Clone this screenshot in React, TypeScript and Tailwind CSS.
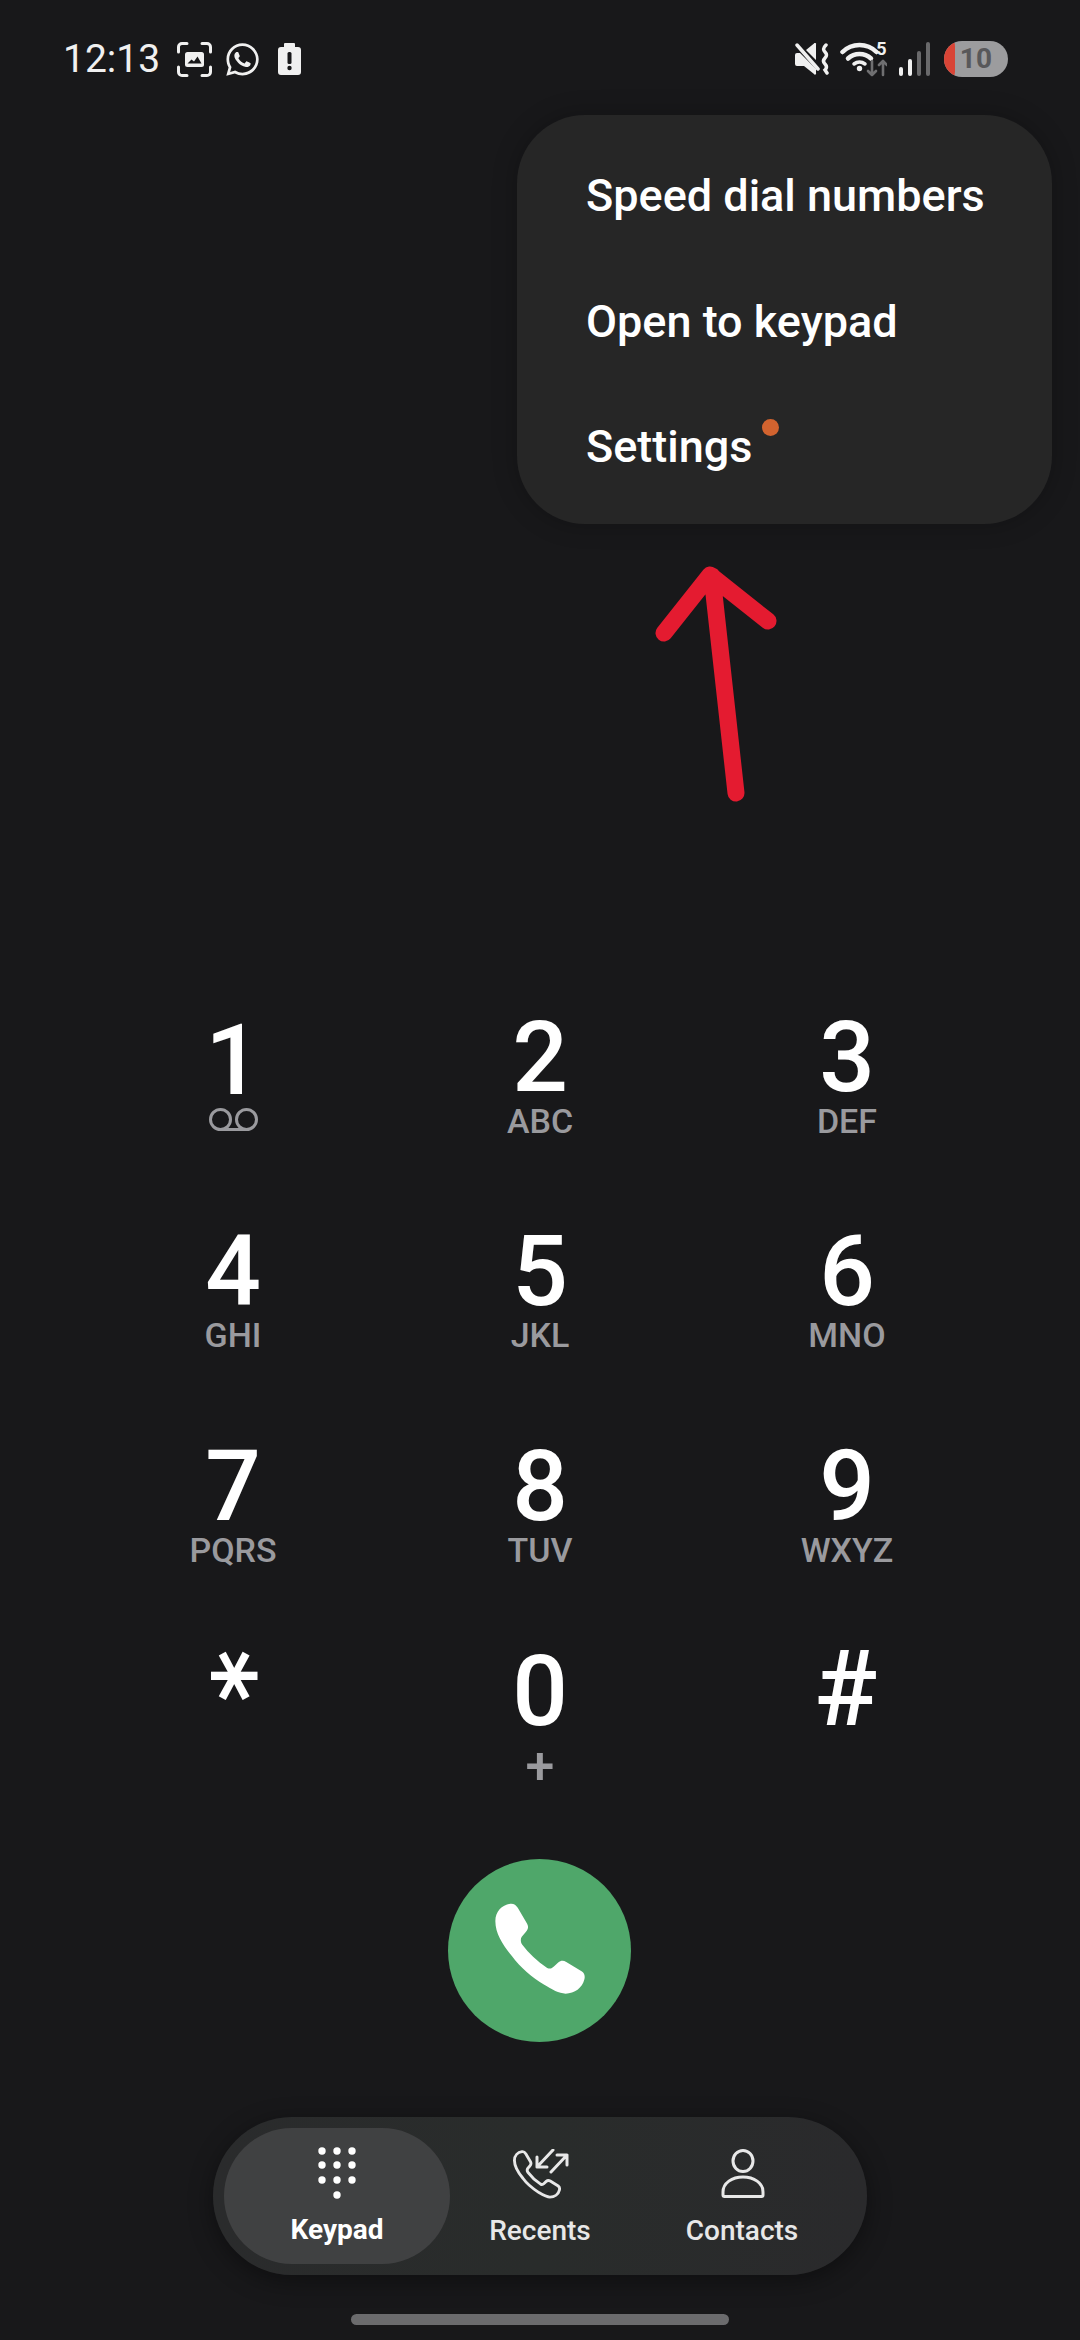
import React from 'react';
import { FaWhatsapp } from 'react-icons/fa';

const PHONE_PATH =
  'M225 245 C225 215 245 197 270 193 C280 192 287 197 292 205 L320 253 C325 262 323 270 316 278 L304 292 C300 298 300 308 305 315 C325 342 350 365 380 385 C388 389 394 387 400 381 L413 369 C420 363 428 362 437 367 L484 396 C491 401 494 410 491 420 C485 445 462 462 435 462 C415 462 395 450 370 435 C335 412 300 385 275 350 C250 320 225 285 225 245 Z';

const keys = [
  { d: '1', sub: 'vm' },
  { d: '2', sub: 'ABC' },
  { d: '3', sub: 'DEF' },
  { d: '4', sub: 'GHI' },
  { d: '5', sub: 'JKL' },
  { d: '6', sub: 'MNO' },
  { d: '7', sub: 'PQRS' },
  { d: '8', sub: 'TUV' },
  { d: '9', sub: 'WXYZ' },
];

const ScreenshotIcon = () => (
  <svg width="35" height="35" viewBox="0 0 35 35" fill="none">
    <path d="M1.5 10V5a3.5 3.5 0 0 1 3.5-3.5h5M25 1.5h5A3.5 3.5 0 0 1 33.5 5v5M33.5 25v5a3.5 3.5 0 0 1-3.5 3.5h-5M10 33.5H5A3.5 3.5 0 0 1 1.5 30v-5" stroke="#f0f0f0" strokeWidth="3" strokeLinecap="round" />
    <rect x="8" y="10" width="19" height="15" rx="2.5" fill="#f0f0f0" />
    <path d="M10.5 21.5l4-4 2.5 2 3.5-5 4 7z" fill="#18181a" />
  </svg>
);

const BatteryAlert = () => (
  <svg width="23" height="32" viewBox="0 0 23 32">
    <path d="M7 0h9a1 1 0 0 1 1 1v3h3a3 3 0 0 1 3 3v22a3 3 0 0 1-3 3H3a3 3 0 0 1-3-3V7a3 3 0 0 1 3-3h3V1a1 1 0 0 1 1-1z" fill="#f0f0f0" />
    <rect x="9.5" y="9" width="4" height="12" rx="1.5" fill="#18181a" />
    <circle cx="11.5" cy="25" r="2.2" fill="#18181a" />
  </svg>
);

const MuteIcon = () => (
  <svg width="35" height="32" viewBox="0 0 35 32" fill="none">
    <path d="M1 12a2 2 0 0 1 2-2h3L22 26v4a1 1 0 0 1-2 1L10 23H3a2 2 0 0 1-2-2z" fill="#f0f0f0" />
    <path d="M12 7l8-6.500a1 1 0 0 1 2 1V17z" fill="#f0f0f0" />
    <path d="M3 2l21 24" stroke="#f0f0f0" strokeWidth="3.500" strokeLinecap="round" />
    <path d="M32 2c-3 3-3 5-1 7s2 4 0 6-2 4 0 6 2 4 0 6l2 3" stroke="#f0f0f0" strokeWidth="3.500" strokeLinecap="round" />
  </svg>
);

const WifiIcon = () => (
  <div className="relative w-[47px] h-[36px]">
    <svg width="47" height="36" viewBox="0 0 47 36" fill="none">
      <path d="M2.500 11A24 24 0 0 1 36.500 11" stroke="#f0f0f0" strokeWidth="4.500" strokeLinecap="round" />
      <path d="M8 17.500a17 17 0 0 1 23 0" stroke="#f0f0f0" strokeWidth="4.500" strokeLinecap="round" />
      <path d="M14 23a9 9 0 0 1 11 0" stroke="#f0f0f0" strokeWidth="3.500" strokeLinecap="round" />
      <circle cx="19.500" cy="27.500" r="2.700" fill="#f0f0f0" />
      <path d="M32 20v14M28 30l4 4 4-4" stroke="#6f6f71" strokeWidth="2.600" strokeLinecap="round" strokeLinejoin="round" />
      <path d="M43 34V20M39 24l4-4 4 4" stroke="#6f6f71" strokeWidth="2.600" strokeLinecap="round" strokeLinejoin="round" />
    </svg>
    <span className="absolute right-0 top-[-1px] text-[18px] leading-[18px] font-bold text-[#f0f0f0]">5</span>
  </div>
);

const SignalBars = () => (
  <div className="flex items-end gap-[4.500px] h-[34px]">
    <div className="w-[4.500px] h-[9px] rounded-full bg-[#f0f0f0]" />
    <div className="w-[4.500px] h-[17px] rounded-full bg-[#f0f0f0]" />
    <div className="w-[4.500px] h-[25px] rounded-full bg-[#69696b]" />
    <div className="w-[4.500px] h-[34px] rounded-full bg-[#69696b]" />
  </div>
);

const BatteryPill = () => (
  <div className="relative w-[64px] h-[36px] rounded-full bg-[#9c9c9e] overflow-hidden flex items-center justify-end pr-[16px]">
    <div className="absolute left-[-12px] top-[-6px] w-[23px] h-[48px] rounded-full bg-[#d94436]" />
    <span className="text-[28px] leading-none font-bold text-[#58585a]">10</span>
  </div>
);

const VoicemailIcon = () => (
  <svg width="49" height="23" viewBox="0 0 49 23" fill="none">
    <circle cx="11.500" cy="11.500" r="10" stroke="#9a9a9e" strokeWidth="3" />
    <circle cx="37.500" cy="11.500" r="10" stroke="#9a9a9e" strokeWidth="3" />
    <path d="M11.500 21.500h26" stroke="#9a9a9e" strokeWidth="3" />
  </svg>
);

const KeypadIcon = () => (
  <svg width="38" height="52" viewBox="0 0 38 52" fill="#ffffff">
    {[4, 19, 34].map((x) =>
      [4, 18, 33].map((y) => <circle key={`${x}-${y}`} cx={x} cy={y} r="3.700" />)
    )}
    <circle cx="19" cy="48" r="3.700" />
  </svg>
);

const RecentsIcon = () => (
  <svg width="58" height="50" viewBox="0 0 58 50" fill="none">
    <svg x="1" y="1" width="50" height="49" viewBox="215 183 287 290">
      <path d={PHONE_PATH} stroke="#e8e8e8" strokeWidth="17" />
    </svg>
    <path d="M42 1L26 18M26 8v10h10" stroke="#e8e8e8" strokeWidth="3" strokeLinecap="round" strokeLinejoin="round" />
    <path d="M40 23L56 6M46 6h10v10" stroke="#e8e8e8" strokeWidth="3" strokeLinecap="round" strokeLinejoin="round" />
  </svg>
);

const ContactsIcon = () => (
  <svg width="44" height="50" viewBox="0 0 44 50" fill="none">
    <ellipse cx="22" cy="12" rx="10" ry="10.500" stroke="#e8e8e8" strokeWidth="3" />
    <path d="M2 46v-3c0-9 9-15 20-15s20 6 20 15v3a1.500 1.500 0 0 1-1.500 1.500h-37A1.500 1.500 0 0 1 2 46z" stroke="#e8e8e8" strokeWidth="3" />
  </svg>
);

export default function App() {
  return (
    <div className="relative w-[1080px] h-[2340px] overflow-hidden bg-[#18181a] text-white [font-family:Roboto,sans-serif]">
      {/* status bar */}
      <div className="flex items-center justify-between h-[118px] pl-[63px] pr-[72px]">
        <div className="flex items-center">
          <span className="w-[95px] text-[39px] leading-none text-[#f0f0f0]">12:13</span>
          <div className="flex items-center ml-[19px] gap-[12px]">
            <ScreenshotIcon />
            <FaWhatsapp size={37} color="#f0f0f0" />
          </div>
          <div className="ml-[17px]">
            <BatteryAlert />
          </div>
        </div>
        <div className="flex items-center">
          <MuteIcon />
          <div className="ml-[11px]">
            <WifiIcon />
          </div>
          <div className="ml-[12px]">
            <SignalBars />
          </div>
          <div className="ml-[14px]">
            <BatteryPill />
          </div>
        </div>
      </div>

      {/* overflow menu */}
      <div className="absolute left-[517px] top-[115px] w-[535px] h-[409px] rounded-[68px] bg-[#262626] pt-[18px] pl-[69px] shadow-[0_0_24px_rgba(0,0,0,0.25)]">
        <div className="h-[125.500px] flex items-center text-[45px] font-medium leading-none">Speed dial numbers</div>
        <div className="h-[125.500px] flex items-center text-[45px] font-medium leading-none">Open to keypad</div>
        <div className="h-[125.500px] flex items-center text-[45px] font-medium leading-none">
          Settings
          <div className="ml-[9px] mb-[38px] w-[17px] h-[17px] rounded-full bg-[#d2632f]" />
        </div>
      </div>

      {/* annotation arrow */}
      <svg className="absolute left-[650px] top-[560px]" width="130" height="245" viewBox="0 0 130 245" fill="none">
        <path d="M86 233L62 16M14 73L60 15L118 61" stroke="#e41b30" strokeWidth="17" strokeLinecap="round" strokeLinejoin="round" />
      </svg>

      {/* dial pad */}
      <div className="mt-[891px] mx-auto w-[921px] grid grid-cols-3 grid-rows-[214px_215px_205px_auto]">
        {keys.map((k) => (
          <div key={k.d} className="flex flex-col items-center">
            {k.sub === 'vm' ? (
              <>
                <span className="mt-[8px] text-[98px] leading-[88px] font-medium">{k.d}</span>
                <div className="mt-[3px]">
                  <VoicemailIcon />
                </div>
              </>
            ) : (
              <>
                <span className="mt-[5px] text-[98px] leading-[88px] font-medium">{k.d}</span>
                <span className="mt-[2px] text-[34px] leading-[34px] font-medium text-[#9a9a9e]">{k.sub}</span>
              </>
            )}
          </div>
        ))}
        <div className="flex flex-col items-center">
          <span className="rotate-90 mt-[-17px] mr-[32px] text-[100px] leading-[100px] font-bold [font-family:'DejaVu_Sans',sans-serif]">*</span>
        </div>
        <div className="flex flex-col items-center">
          <span className="mt-[5px] text-[98px] leading-[88px] font-medium">0</span>
          <span className="mt-[5px] text-[52px] leading-[52px] font-medium text-[#9a9a9e]">+</span>
        </div>
        <div className="flex flex-col items-center">
          <span className="mt-[-6px] mr-[2px] text-[105px] leading-[105px] font-medium">#</span>
        </div>
      </div>

      {/* call button */}
      <div className="absolute left-[448px] top-[1859px] w-[183px] h-[183px] rounded-full bg-[#4fa76a] flex items-center justify-center">
        <svg width="96" height="96" viewBox="215 185 287 287" fill="#ffffff" className="mt-[-3px]">
          <path d={PHONE_PATH} />
        </svg>
      </div>

      {/* bottom nav */}
      <div className="absolute left-[213px] top-[2117px] w-[654px] h-[158px] rounded-full bg-gradient-to-r from-[#2a2b2c] via-[#292c2b] to-[#2a2a2c] pl-[11px] flex items-center shadow-[0_6px_24px_rgba(0,0,0,0.4)]">
        <div className="w-[226px] h-[136px] rounded-[68px] bg-[#404142] flex flex-col items-center pt-[19px]">
          <KeypadIcon />
          <span className="mt-[17px] text-[28px] leading-[28px] font-bold">Keypad</span>
        </div>
        <div className="w-[180px] h-[136px] flex flex-col items-center pt-[21px]">
          <RecentsIcon />
          <span className="mt-[18px] text-[28px] leading-[28px] font-medium text-[#e8e8e8]">Recents</span>
        </div>
        <div className="w-[224px] h-[136px] flex flex-col items-center pt-[21px]">
          <div className="ml-[2px]">
            <ContactsIcon />
          </div>
          <span className="mt-[18px] text-[28px] leading-[28px] font-medium text-[#e8e8e8]">Contacts</span>
        </div>
      </div>

      {/* gesture bar */}
      <div className="absolute left-[351px] top-[2314px] w-[378px] h-[11px] rounded-full bg-[#6b6b6d]" />
    </div>
  );
}
